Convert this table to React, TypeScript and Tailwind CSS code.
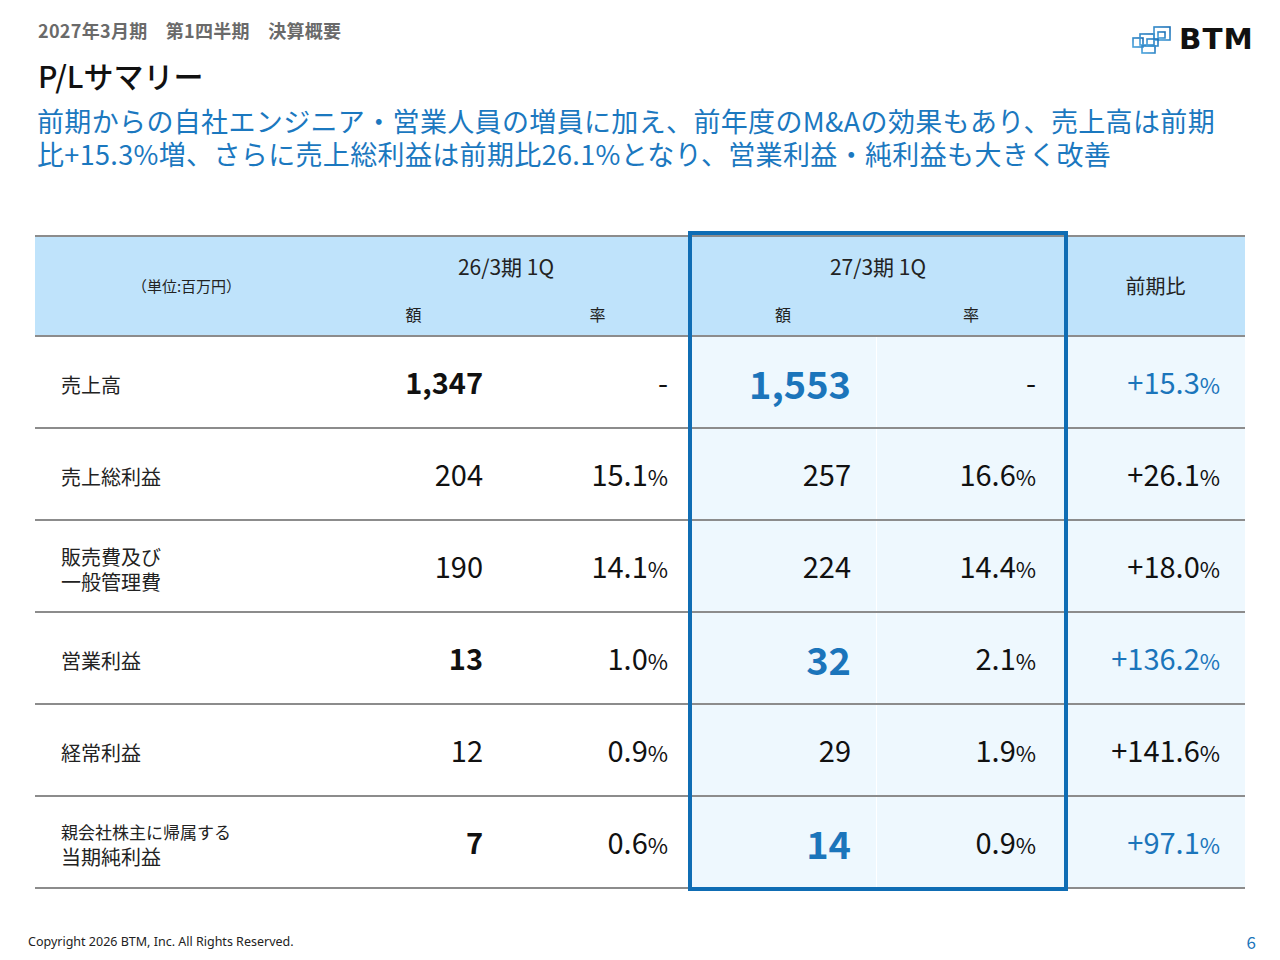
import React from 'react';

type Row = {
  label: React.ReactNode;
  prevAmt: string;
  prevRate: string;
  curAmt: string;
  curRate: string;
  yoy: string;
  strong?: boolean;
};

const ROWS: Row[] = [
  { label: '売上高', prevAmt: '1,347', prevRate: '-', curAmt: '1,553', curRate: '-', yoy: '+15.3', strong: true },
  { label: '売上総利益', prevAmt: '204', prevRate: '15.1', curAmt: '257', curRate: '16.6', yoy: '+26.1' },
  {
    label: (
      <span className="block">
        <span className="block leading-[25px]">販売費及び</span>
        <span className="block leading-[25px]">一般管理費</span>
      </span>
    ),
    prevAmt: '190',
    prevRate: '14.1',
    curAmt: '224',
    curRate: '14.4',
    yoy: '+18.0',
  },
  { label: '営業利益', prevAmt: '13', prevRate: '1.0', curAmt: '32', curRate: '2.1', yoy: '+136.2', strong: true },
  { label: '経常利益', prevAmt: '12', prevRate: '0.9', curAmt: '29', curRate: '1.9', yoy: '+141.6' },
  {
    label: (
      <span className="block">
        <span className="block text-[17px] leading-[25px]">親会社株主に帰属する</span>
        <span className="block text-[20px] leading-[26px]">当期純利益</span>
      </span>
    ),
    prevAmt: '7',
    prevRate: '0.6',
    curAmt: '14',
    curRate: '0.9',
    yoy: '+97.1',
    strong: true,
  },
];

function Rate({ value, className = '' }: { value: string; className?: string }) {
  if (value === '-') return <span className={className}>-</span>;
  return (
    <span className={className}>
      {value}
      <span className="text-[22px]">%</span>
    </span>
  );
}

function Logo() {
  return (
    <div className="flex items-center gap-[7px]">
      <svg width="40" height="30" viewBox="0 0 40 30" fill="none">
        <defs>
          <linearGradient id="lg" x1="0" y1="1" x2="1" y2="0">
            <stop offset="0" stopColor="#4aa3dc" />
            <stop offset="1" stopColor="#1b6fb5" />
          </linearGradient>
        </defs>
        <g stroke="url(#lg)" strokeWidth="1.6">
          <rect x="1" y="13" width="10" height="9" />
          <rect x="8" y="9" width="14" height="11" />
          <rect x="22" y="2" width="16" height="13" />
          <rect x="26" y="7" width="7" height="6" />
          <rect x="10" y="21" width="13" height="7" />
          <rect x="15" y="14" width="11" height="7" />
        </g>
      </svg>
      <span className="text-[28px] font-extrabold tracking-[1px] text-[#111] leading-none [font-family:'DejaVu_Sans',sans-serif] scale-x-[1.05] origin-left">
        BTM
      </span>
    </div>
  );
}

const COLS = 'grid grid-cols-[287px_183px_185px_186px_190px_179px]';

export default function App() {
  return (
    <div className="relative w-[1280px] h-[960px] bg-white overflow-hidden [font-family:'Noto_Sans_CJK_JP','Noto_Sans',sans-serif]">
      {/* heading */}
      <div className="flex items-start justify-between pl-[38px] pr-[30px] pt-[17px]">
        <div>
          <div className="text-[18px] leading-[26px] font-bold text-[#6a6a6a] whitespace-pre tracking-[0.3px]">
            2027年3月期　第1四半期　決算概要
          </div>
          <h1 className="mt-[15px] text-[30px] leading-[34px] font-medium text-[#111]">P/Lサマリー</h1>
        </div>
        <div className="pt-[8px]">
          <Logo />
        </div>
      </div>
      <div className="pl-[37px] mt-[12px] text-[27px] leading-[33px] text-[#1b78bf] whitespace-nowrap tracking-[0.35px]">
        <div>前期からの自社エンジニア・営業人員の増員に加え、前年度のM&amp;Aの効果もあり、売上高は前期</div>
        <div>比+15.3%増、さらに売上総利益は前期比26.1%となり、営業利益・純利益も大きく改善</div>
      </div>

      {/* table */}
      <div className="relative ml-[35px] mt-[65px] w-[1210px]">
        <div className={`${COLS} grid-rows-[56px_42px] bg-[#bfe3fb] border-t-2 border-b-2 border-[#8c8c8c] text-[#222]`}>
          <div className="row-span-2 flex items-center justify-center text-[15px] pl-[16px]">（単位:百万円）</div>
          <div className="col-span-2 flex items-center justify-center text-[21px] pt-[3px]">26/3期 1Q</div>
          <div className="col-span-2 flex items-center justify-center text-[21px] pt-[3px]">27/3期 1Q</div>
          <div className="row-span-2 flex items-center justify-center text-[20px]">前期比</div>
          <div className="flex items-center justify-center text-[16px]">額</div>
          <div className="flex items-center justify-center text-[16px]">率</div>
          <div className="flex items-center justify-center text-[16px]">額</div>
          <div className="flex items-center justify-center text-[16px]">率</div>
        </div>

        {ROWS.map((r, i) => (
          <div key={i} className={`${COLS} h-[92px] border-b-2 border-[#8c8c8c] text-[#111]`}>
            <div className="flex items-center pl-[26px] pt-[5px] text-[20px] text-[#222]">{r.label}</div>
            <div className={`flex items-center justify-end pr-[22px] text-[29px] ${r.strong ? 'font-bold' : ''}`}>
              {r.prevAmt}
            </div>
            <div className="flex items-center justify-end pr-[22px] text-[29px]">
              <Rate value={r.prevRate} />
            </div>
            <div
              className={`flex items-center justify-end pr-[25px] bg-[#eef8fe] ${
                r.strong ? 'text-[38px] font-bold text-[#1b75bb]' : 'text-[29px]'
              }`}
            >
              {r.curAmt}
            </div>
            <div className="flex items-center justify-end pr-[30px] bg-[#eef8fe] border-l border-white text-[29px]">
              <Rate value={r.curRate} />
            </div>
            <div
              className={`flex items-center justify-end pr-[25px] bg-[#eef8fe] text-[29px] ${
                r.strong ? 'text-[#1b75bb]' : ''
              }`}
            >
              <Rate value={r.yoy} />
            </div>
          </div>
        ))}

        {/* highlight frame over 27/3期 columns */}
        <div className="absolute left-[653px] top-[-4px] bottom-[-2px] w-[380px] border-4 border-[#0f6db4] pointer-events-none" />
      </div>

      {/* footer */}
      <div className="absolute left-[28px] bottom-[8px] text-[12.5px] text-[#222] [font-family:'Noto_Sans',sans-serif]">
        Copyright 2026 BTM, Inc. All Rights Reserved.
      </div>
      <div className="absolute right-[24px] bottom-[6px] text-[17px] text-[#1b75bb]">6</div>
    </div>
  );
}
